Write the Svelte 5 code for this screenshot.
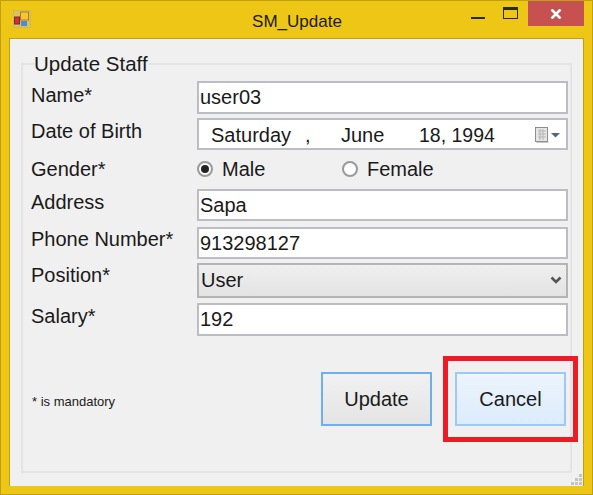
<script>
  // form rows; the label sits a bit above the field centre like the real dialog
  const fields = [
    { label: "Name*", value: "user03", h: 33, top: 0, lift: 4 },
    { label: "Address", value: "Sapa", h: 32, top: 0, lift: 6 },
    { label: "Phone Number*", value: "913298127", h: 32, top: 6, lift: 8 },
  ];
</script>

<div class="window">
  <header class="titlebar">
    <svg class="app-icon" width="18" height="18" viewBox="0 0 18 18">
      <rect x="0.5" y="0.5" width="17" height="17" fill="#d9c25a" stroke="#c2b27a" stroke-dasharray="2 1" />
      <rect x="7.5" y="2" width="8" height="8" fill="#f7c534" stroke="#a8801a" />
      <rect x="1.5" y="7" width="5" height="7" fill="#c8343c" stroke="#8e2028" />
      <rect x="8" y="11" width="6" height="5" fill="#4a8ae0" />
    </svg>
    <span class="title">SM_Update</span>
    <div class="controls">
      <span class="min"></span>
      <span class="max"></span>
      <span class="close">
        <svg width="12" height="10" viewBox="0 0 12 10">
          <path d="M1.5 0.5 L10.5 9.5 M10.5 0.5 L1.5 9.5" stroke="#fff" stroke-width="2.6" fill="none" />
        </svg>
      </span>
    </div>
  </header>

  <main class="client">
    <fieldset class="group">
      <legend>Update Staff</legend>

      <div class="row" style="height:33px">
        <span class="label lift-4">{fields[0].label}</span>
        <input class="field" value={fields[0].value} />
      </div>

      <div class="row date-row">
        <span class="label lift-6">Date of Birth</span>
        <div class="field date">
          <span class="d1">Saturday</span>
          <span class="d2">,</span>
          <span class="d3">June</span>
          <span class="d4">18, 1994</span>
          <svg class="cal" width="30" height="18" viewBox="0 0 30 18">
            <rect x="1.5" y="1.5" width="12" height="14" fill="#e6e6e6" stroke="#8d8d8d" />
            <path d="M4 5h8M4 8h8M4 11h8M6 3v11M9 3v11" stroke="#b5b5b5" fill="none" />
            <path d="M14.500 16.500h-12" stroke="#c9c9c9" />
            <path d="M17 7h9l-4.500 4.500z" fill="#50658a" />
          </svg>
        </div>
      </div>

      <div class="row gender-row">
        <span class="label">Gender*</span>
        <div class="radios">
          <label class="radio male"><span class="dot on"></span>Male</label>
          <label class="radio"><span class="dot"></span>Female</label>
        </div>
      </div>

      {#each fields.slice(1) as f}
        <div class="row" style="height:{f.h}px; margin-top:{f.top}px">
          <span class="label lift-{f.lift}">{f.label}</span>
          <input class="field" value={f.value} />
        </div>
      {/each}

      <div class="row position-row">
        <span class="label lift-10">Position*</span>
        <div class="field select">
          <span>User</span>
          <svg width="12" height="9" viewBox="0 0 12 9">
            <path d="M1.500 1.500 L6 6 L10.500 1.500" stroke="#555" stroke-width="2.600" fill="none" />
          </svg>
        </div>
      </div>

      <div class="row salary-row">
        <span class="label lift-6">Salary*</span>
        <input class="field" value="192" />
      </div>

      <div class="actions">
        <span class="note">* is mandatory</span>
        <button class="btn update">Update</button>
        <button class="btn cancel">Cancel</button>
      </div>
    </fieldset>

    <svg class="grip" width="12" height="12" viewBox="0 0 12 12">
      <path d="M8 0h3v3H8zM4 4h3v3H4zM8 4h3v3H8zM0 8h3v3H0zM4 8h3v3H4zM8 8h3v3H8z" fill="#c4c4c4" />
    </svg>
  </main>

  <div class="highlight"></div>
</div>

<style>
  :global(body) {
    margin: 0;
    font-family: "Liberation Sans", Arial, sans-serif;
  }

  .window {
    position: relative;
    box-sizing: border-box;
    width: 593px;
    height: 495px;
    background: #eec616;
    border: 1px solid #c09f12;
    display: flex;
    flex-direction: column;
    color: #1a1a1a;
  }

  .titlebar {
    position: relative;
    height: 37px;
    flex: none;
    display: flex;
    align-items: center;
    justify-content: center;
  }

  .app-icon {
    position: absolute;
    left: 12px;
    top: 9px;
  }

  .title {
    font-size: 17px;
    margin-top: 4px;
    margin-left: 1px;
  }

  .controls {
    position: absolute;
    top: 0;
    right: 8px;
    display: flex;
    align-items: flex-start;
  }

  .min {
    width: 14px;
    height: 2px;
    background: #2a2a1a;
    margin: 16px 18px 0 0;
  }

  .max {
    box-sizing: border-box;
    width: 15px;
    height: 12px;
    border: 1px solid #2a2a1a;
    border-top-width: 3px;
    margin: 6px 10px 0 0;
  }

  .close {
    width: 56px;
    height: 25px;
    background: #c75050;
    display: flex;
    align-items: center;
    justify-content: center;
  }

  .client {
    position: relative;
    box-sizing: border-box;
    flex: 1;
    margin: 0 8px 8px;
    background: #f0f0f0;
    border: 1px solid #bfa012;
    border-bottom: none;
    padding: 14px 11px 13px 11px;
    display: flex;
  }

  .group {
    box-sizing: border-box;
    flex: 1;
    margin: 0;
    min-width: 0;
    border: 2px solid #e4e4e4;
    padding: 0 2px 0 8px;
    display: flex;
    flex-direction: column;
  }

  legend {
    font-size: 20.500px;
    line-height: 22px;
    margin-left: 3px;
    padding: 0 1px 0 0;
  }

  .row {
    display: flex;
    align-items: center;
    justify-content: space-between;
    font-size: 20px;
  }

  .row:first-of-type {
    margin-top: 6px;
  }

  .label {
    font-size: 20px;
    white-space: nowrap;
  }

  .lift-4 { margin-bottom: 4px; }
  .lift-6 { margin-bottom: 6px; }
  .lift-8 { margin-bottom: 8px; }
  .lift-10 { margin-bottom: 10px; }

  .field {
    box-sizing: border-box;
    width: 371px;
    height: 100%;
    margin: 0;
    border: 2px solid #bcbcc4;
    background: #fff;
    font: 20px "Liberation Sans", Arial, sans-serif;
    color: #1a1a1a;
    padding: 0 0 0 1px;
    outline: none;
    border-radius: 0;
  }

  .date-row {
    height: 32px;
    margin-top: 4px;
  }

  .date {
    position: relative;
    display: flex;
    align-items: center;
  }

  .date span {
    position: absolute;
    top: 4px;
  }

  .d1 { left: 12px; }
  .d2 { left: 106px; }
  .d3 { left: 142px; }
  .d4 { left: 220px; font-size: 19.500px; }

  .cal {
    position: absolute;
    right: 2px;
    top: 6px;
  }

  .gender-row {
    height: 34px;
    margin-top: 2px;
    margin-bottom: 3px;
  }

  .radios {
    width: 371px;
    display: flex;
  }

  .radio {
    display: flex;
    align-items: center;
    gap: 9px;
    font-size: 20px;
  }

  .male {
    width: 145px;
  }

  .dot {
    box-sizing: border-box;
    width: 16px;
    height: 16px;
    border-radius: 50%;
    border: 2px solid #9a9a9a;
    background: #fff;
    position: relative;
    display: block;
  }

  .dot.on::after {
    content: "";
    position: absolute;
    inset: 2px;
    border-radius: 50%;
    background: #222;
  }

  .position-row {
    height: 35px;
    margin-top: 4px;
  }

  .select {
    display: flex;
    align-items: center;
    justify-content: space-between;
    padding: 0 4px 0 2px;
    background: linear-gradient(#efefef, #e3e3e3);
    border-color: #b4b4b4;
  }

  .salary-row {
    height: 33px;
    margin-top: 5px;
  }

  .actions {
    display: flex;
    align-items: center;
    margin-top: 36px;
  }

  .note {
    font-size: 13px;
    margin-right: auto;
    margin-top: 5px;
    margin-left: 1px;
  }

  .btn {
    box-sizing: border-box;
    width: 111px;
    height: 54px;
    font: 20px "Liberation Sans", Arial, sans-serif;
    color: #1a1a1a;
    border: 2px solid #6cb0f0;
    background: linear-gradient(#f1f1f1, #e4e4e4);
    padding: 0;
    border-radius: 0;
  }

  .cancel {
    margin-left: 23px;
    margin-right: 2px;
    border-color: #9ccaf4;
    background: linear-gradient(#ecf4fc, #dcecfc);
  }

  .grip {
    position: absolute;
    right: 0;
    bottom: 0;
  }

  /* annotation drawn over the screenshot */
  .highlight {
    position: absolute;
    left: 442px;
    top: 355px;
    width: 135px;
    height: 86px;
    box-sizing: border-box;
    border: 5px solid #ed1c24;
    pointer-events: none;
  }
</style>
